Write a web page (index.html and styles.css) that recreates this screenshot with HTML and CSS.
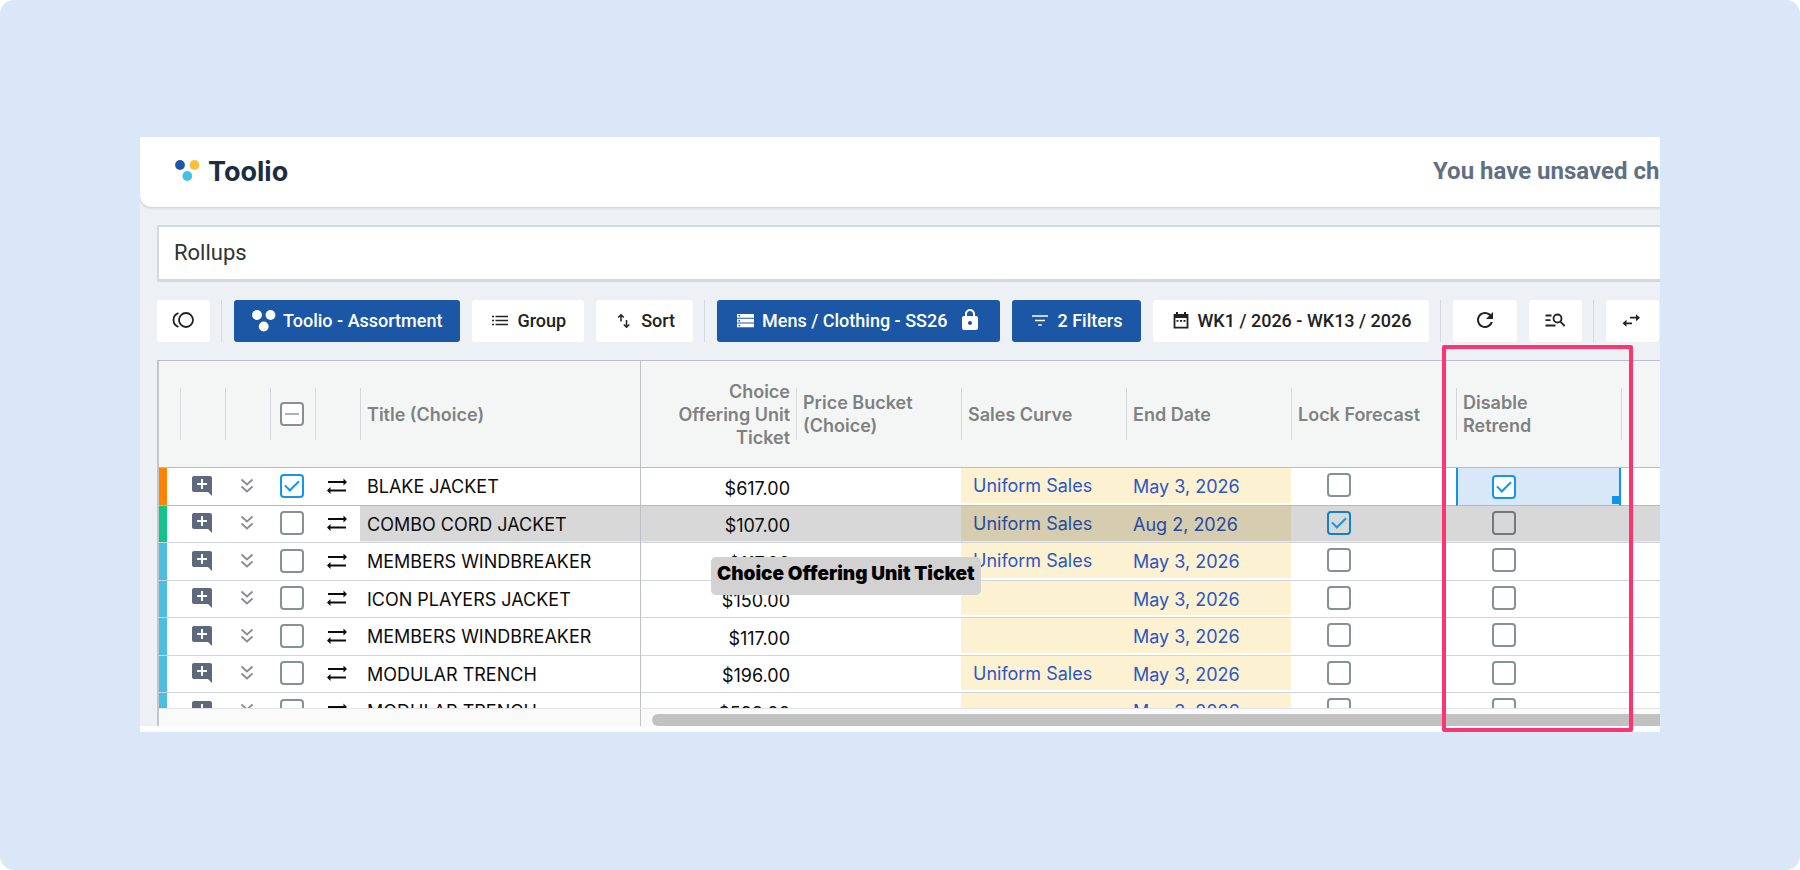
FILE: index.html
```html
<!DOCTYPE html>
<html lang="en">

<head>
	<meta charset="UTF-8">
	<meta name="viewport" content="width=device-width, initial-scale=1.0">
	<title>Toolio - Rollups</title>
	<link rel="stylesheet" href="styles.css">
</head>

<body>
	<!-- icons shared by the table rows -->
	<svg class="sprite" aria-hidden="true">
		<symbol id="i-comment" viewBox="0 0 24 24">
			<path d="M22 4c0-1.1-.9-2-2-2H4c-1.1 0-2 .9-2 2v12c0 1.1.9 2 2 2h14l4 4V4zM17 11h-4v4h-2v-4H7V9h4V5h2v4h4v2z" fill="currentColor"/>
		</symbol>
		<symbol id="i-expand" viewBox="0 0 24 24">
			<path d="M6.500 5.500l5.500 5 5.500-5M6.500 12.500l5.500 5 5.500-5" fill="none" stroke="currentColor" stroke-width="1.800"/>
		</symbol>
		<symbol id="i-swap" viewBox="0 0 24 24">
			<path d="M3 8h16M5 16.500h16" stroke="currentColor" stroke-width="2"/>
			<path d="M18.500 4.500L22 8l-3.500 3.500zM5.500 13L2 16.500 5.500 20z" fill="currentColor"/>
		</symbol>
	</svg>

	<div class="page">
		<main class="panel">
			<header class="topbar">
				<a class="logo" href="#">
					<svg width="25" height="22" viewBox="0 0 25 22" aria-hidden="true">
						<circle cx="5" cy="5" r="4.900" fill="#1c57a8"/>
						<circle cx="19.500" cy="5" r="4.900" fill="#fac03e"/>
						<circle cx="12.300" cy="16" r="4.900" fill="#45c1e8"/>
					</svg>
					<span>Toolio</span>
				</a>
				<div class="unsaved">You have unsaved changes</div>
			</header>

			<div class="content">
				<input class="sheet-name" type="text" value="Rollups" aria-label="Sheet name">

				<div class="toolbar">
					<button class="btn btn-icon" type="button" aria-label="Toggle panel">
						<svg width="24" height="24" viewBox="2 1 24 24" fill="none" stroke="currentColor" stroke-width="1.800">
							<circle cx="16" cy="12" r="7"/>
							<path d="M8.500 5.200C5.500 6.200 3.500 8.800 3.500 12s2 5.800 5 6.800"/>
						</svg>
					</button>
					<span class="sep"></span>
					<button class="btn btn-primary" type="button">
						<svg width="24" height="24" viewBox="0 0 24 24" fill="currentColor">
							<circle cx="5" cy="6" r="4.900"/>
							<circle cx="18.500" cy="6" r="4.900"/>
							<circle cx="11.700" cy="17.500" r="4.900"/>
						</svg>
						Toolio - Assortment
					</button>
					<button class="btn" type="button">
						<svg width="20" height="20" viewBox="0 0 20 20" stroke="currentColor" stroke-width="1.600">
							<path d="M5.500 5.500H18M5.500 9.500H18M5.500 13.500H18M2 5.500h2M2 9.500h2M2 13.500h2"/>
						</svg>
						Group
					</button>
					<button class="btn" type="button">
						<svg width="20" height="20" viewBox="0 0 20 20" fill="none" stroke="currentColor" stroke-width="1.500">
							<path d="M7 10.500V4M4.200 6.500L7 3.700l2.800 2.800M12.500 9v7M9.800 13.500l2.700 2.800 2.800-2.800"/>
						</svg>
						Sort
					</button>
					<span class="sep"></span>
					<button class="btn btn-primary" type="button">
						<svg width="20" height="20" viewBox="0 0 20 20">
							<path d="M2 3h17v3.700H2zM2 7.800h17v3.700H2zM2 12.600h17v3.700H2z" fill="currentColor"/>
							<path d="M3.500 4.100h1.600v1.500H3.500zM3.500 8.900h1.600v1.500H3.500zM3.500 13.700h1.600v1.500H3.500z" fill="#1c57a5"/>
						</svg>
						Mens / Clothing - SS26
						<svg class="lock" width="24" height="24" viewBox="0 1 24 24">
							<path d="M18 8h-1V6c0-2.760-2.240-5-5-5S7 3.240 7 6v2H6c-1.100 0-2 .9-2 2v10c0 1.100.9 2 2 2h12c1.100 0 2-.9 2-2V10c0-1.100-.9-2-2-2zm-6 9c-1.100 0-2-.9-2-2s.9-2 2-2 2 .9 2 2-.9 2-2 2zm3.100-9H8.900V6c0-1.710 1.390-3.100 3.100-3.100s3.100 1.390 3.100 3.100v2z" fill="currentColor"/>
						</svg>
					</button>
					<button class="btn btn-primary" type="button">
						<svg width="20" height="20" viewBox="0 0 20 20" stroke="currentColor" stroke-width="1.700">
							<path d="M2 5h16M5 9.500h10M8.200 14h3.600"/>
						</svg>
						2 Filters
					</button>
					<button class="btn" type="button">
						<svg width="20" height="20" viewBox="0 0 20 20">
							<path d="M3.500 4h13v12.700h-13z" fill="none" stroke="currentColor" stroke-width="1.800"/>
							<path d="M3 3h14v4H3zM5 1h2v3H5zM13 1h2v3h-2zM5.500 9h2v1.800h-2zM9 9h2v1.800H9zM12.500 9h2v1.800h-2z" fill="currentColor"/>
						</svg>
						WK1 / 2026 - WK13 / 2026
					</button>
					<span class="sep"></span>
					<button class="btn btn-refresh" type="button" aria-label="Refresh">
						<svg width="24" height="24" viewBox="0 1 24 24">
							<path d="M17.650 6.350C16.200 4.900 14.210 4 12 4c-4.420 0-7.990 3.580-7.990 8s3.570 8 7.990 8c3.730 0 6.840-2.550 7.730-6h-2.080c-.82 2.330-3.040 4-5.650 4-3.310 0-6-2.690-6-6s2.690-6 6-6c1.660 0 3.140.69 4.220 1.780L13 11h7V4l-2.350 2.350z" fill="currentColor"/>
						</svg>
					</button>
					<button class="btn btn-icon" type="button" aria-label="Find">
						<svg width="24" height="24" viewBox="2 1 24 24" fill="none" stroke="currentColor" stroke-width="1.800">
							<path d="M3.500 7.500h6M3.500 12.200h5M3.500 17.500h10M18.500 13.800l4.200 4.200"/>
							<circle cx="15.500" cy="10.500" r="4"/>
						</svg>
					</button>
					<span class="sep"></span>
					<button class="btn btn-icon" type="button" aria-label="Swap">
						<svg width="24" height="24" viewBox="2 0 24 24">
							<path d="M11 8.700h8M5 14.300h8" stroke="currentColor" stroke-width="1.800"/>
							<path d="M17 5.200l4 3.500-4 3.500zM7.500 10.800l-4 3.500 4 3.500z" fill="currentColor"/>
						</svg>
					</button>
				</div>

				<div class="grid">
					<div class="grid-scroll">
						<table>
							<colgroup>
								<col class="c-status">
								<col class="c-tool">
								<col class="c-tool">
								<col class="c-tool">
								<col class="c-tool">
								<col class="c-title">
								<col class="c-ticket">
								<col class="c-data">
								<col class="c-data">
								<col class="c-data">
								<col class="c-data">
								<col class="c-data">
								<col>
							</colgroup>
							<thead>
								<tr>
									<th></th>
									<th><div class="head"></div></th>
									<th><div class="head"></div></th>
									<th><div class="head head-check"><input class="some" type="checkbox" aria-label="Select all"></div></th>
									<th><div class="head"></div></th>
									<th class="frozen"><div class="head">Title (Choice)</div></th>
									<th><div class="head head-right">Choice Offering Unit Ticket</div></th>
									<th><div class="head">Price Bucket (Choice)</div></th>
									<th><div class="head">Sales Curve</div></th>
									<th><div class="head">End Date</div></th>
									<th><div class="head">Lock Forecast</div></th>
									<th><div class="head head-narrow">Disable Retrend</div></th>
									<th><div class="head"></div></th>
								</tr>
							</thead>
							<tbody id="rows"></tbody>
						</table>
					</div>
					<div class="scrollbar">
						<div class="scroll-left"></div>
						<div class="scroll-track"><div class="scroll-thumb"></div></div>
					</div>
					<div class="tooltip">Choice Offering Unit Ticket</div>
					<div class="marker"></div>
				</div>
			</div>
		</main>
	</div>

	<script>
		var rows = [
			{ status: "orange", title: "BLAKE JACKET", ticket: "$617.00", curve: "Uniform Sales", end: "May 3, 2026", selected: true, retrend: true },
			{ status: "green", title: "COMBO CORD JACKET", ticket: "$107.00", curve: "Uniform Sales", end: "Aug 2, 2026", lock: true, hover: true },
			{ status: "blue", title: "MEMBERS WINDBREAKER", ticket: "$117.00", curve: "Uniform Sales", end: "May 3, 2026" },
			{ status: "blue", title: "ICON PLAYERS JACKET", ticket: "$150.00", curve: "", end: "May 3, 2026" },
			{ status: "blue", title: "MEMBERS WINDBREAKER", ticket: "$117.00", curve: "", end: "May 3, 2026" },
			{ status: "blue", title: "MODULAR TRENCH", ticket: "$196.00", curve: "Uniform Sales", end: "May 3, 2026" },
			{ status: "blue", title: "MODULAR TRENCH", ticket: "$598.00", curve: "", end: "May 3, 2026" }
		];

		function icon(name) {
			return '<svg class="icon ' + name + '" aria-hidden="true"><use href="#i-' + name + '"/></svg>';
		}

		function check(label, on) {
			return '<input type="checkbox" aria-label="' + label + '"' + (on ? ' checked' : '') + '>';
		}

		document.getElementById("rows").innerHTML = rows.map(function (r) {
			return '<tr class="' + (r.hover ? 'hover' : '') + '">' +
				'<td class="status ' + r.status + '"></td>' +
				'<td class="tool">' + icon("comment") + '</td>' +
				'<td class="tool">' + icon("expand") + '</td>' +
				'<td class="tool">' + check("Select " + r.title, r.selected) + '</td>' +
				'<td class="tool">' + icon("swap") + '</td>' +
				'<td class="frozen data">' + r.title + '</td>' +
				'<td class="data ticket">' + r.ticket + '</td>' +
				'<td class="data"></td>' +
				'<td class="data edit curve">' + r.curve + '</td>' +
				'<td class="data edit">' + r.end + '</td>' +
				'<td class="data flag">' + check("Lock forecast", r.lock) + '</td>' +
				'<td class="data flag' + (r.retrend ? ' active' : '') + '">' + check("Disable retrend", r.retrend) + '</td>' +
				'<td class="data"></td>' +
				'</tr>';
		}).join("");
	</script>
</body>

</html>
```
FILE: styles.css
```css
* {
	box-sizing: border-box;
}

body {
	margin: 0;
	background: #fff;
	font-family: Roboto, "Liberation Sans", sans-serif;
	color: #1f2124;
}

.sprite {
	display: none;
}

svg {
	display: block;
	flex: none;
}

.page {
	min-height: 100vh;
	padding: 137px 140px;
	background: #dae7f8;
	border-radius: 14px;
}

.panel {
	overflow: hidden;
	padding-bottom: 6px;
	background: linear-gradient(#edf0f5, #edf0f5) no-repeat 0 0 / 100% calc(100% - 6px) #fff;
}

/* header */
.topbar {
	display: flex;
	align-items: center;
	justify-content: space-between;
	height: 70px;
	padding: 0 0 2px 35px;
	background: #fff;
	border-bottom-left-radius: 12px;
	box-shadow: 0 1px 3px rgba(40, 50, 70, .2);
}

.logo {
	display: flex;
	align-items: center;
	gap: 8px;
	font: 700 27px "Inter", sans-serif;
	color: #1b2c45;
	text-decoration: none;
}

.unsaved {
	width: 227px;
	overflow: hidden;
	white-space: nowrap;
	font-size: 24px;
	font-weight: 700;
	color: #606f83;
}

.content {
	padding: 18px 0 0 17px;
}

.sheet-name {
	display: block;
	width: 100%;
	height: 57px;
	padding: 0 15px 2px;
	border: 2px solid #d5d8de;
	border-width: 2px 0 3px 2px;
	border-radius: 2px 0 0 2px;
	background: #fff;
	font: 22px Roboto, sans-serif;
	color: #333;
}

/* toolbar */
.toolbar {
	display: flex;
	gap: 12px;
	margin: 18px 0;
}

.btn {
	display: flex;
	flex: none;
	align-items: center;
	justify-content: center;
	gap: 7px;
	height: 42px;
	padding: 0 18px 1px;
	border: 0;
	border-radius: 3px;
	background: #fff;
	font: 500 18px Roboto, sans-serif;
	color: #222;
	white-space: nowrap;
}

.btn-primary {
	background: #1c57a5;
	color: #fff;
}

.btn-icon {
	width: 53px;
	padding: 0;
}

.btn-refresh {
	width: 64px;
}

.btn .lock {
	margin-left: 4px;
}

.sep {
	width: 1px;
	margin-left: -1px;
	background: #d6dadf;
}

/* grid */
.grid {
	position: relative;
	border-top: 1px solid #bcbfc7;
	border-left: 2px solid #c2c5cc;
}

.grid-scroll {
	max-height: 347px;
	overflow: hidden;
}

table {
	width: 100%;
	table-layout: fixed;
	border-collapse: separate;
	border-spacing: 0;
	background: #fff;
	font-family: "Inter", sans-serif;
	font-size: 18px;
}

.c-status {
	width: 21px;
}

.c-tool {
	width: 45px;
}

.c-title {
	width: 281px;
}

.c-ticket {
	width: 155px;
}

.c-data {
	width: 165px;
}

th {
	height: 107px;
	padding: 0;
	border-bottom: 1px solid #b9bbc1;
	background: #f4f6f5;
	font-weight: 600;
	color: #7f8181;
	text-align: left;
}

.head {
	display: flex;
	align-items: center;
	height: 52px;
	padding: 0 6px;
	border-left: 1px solid #d3d6da;
	line-height: 23px;
}

.head-check {
	justify-content: center;
	padding: 0 2px 0 0;
}

.head-right {
	justify-content: flex-end;
	padding-left: 30px;
	border-left: 0;
	text-align: right;
}

.head-narrow {
	padding-right: 60px;
}

td {
	height: 38px;
	padding: 0 7px;
	border-bottom: 1px solid #d2d4dc;
	color: #0c0c0c;
	white-space: nowrap;
}

tr:nth-child(even) td {
	height: 37px;
}

tr:first-child td {
	border-bottom-color: #b8b9bf;
}

.frozen {
	border-right: 1px solid #bdc0c9;
}

.status.orange {
	background: linear-gradient(90deg, #ff8200 8px, #fff 8px);
}

.status.green {
	background: linear-gradient(90deg, #10c48a 8px, #fff 8px);
}

.status.blue {
	background: linear-gradient(90deg, #4bbde0 8px, #fff 8px);
}

.tool {
	padding: 0 2px 2px 0;
}

.tool > * {
	margin: 0 auto;
}

.icon {
	width: 24px;
	height: 24px;
}

.comment {
	color: #5d6a7e;
}

.expand {
	color: #8a8c90;
}

.ticket {
	padding: 3px 6px 0;
	text-align: right;
}

td.edit {
	background: #fcf1d0;
	box-shadow: inset 0 -2px #fff;
	color: #2d56c4;
}

.curve {
	padding: 0 0 2px 12px;
}

.flag {
	padding: 0 0 3px 36px;
}

.hover td.data {
	background: #d8d8d8;
	box-shadow: inset 0 -1px #e8eaee;
}

.hover td.edit {
	background: #d6ccb0;
	color: #284a9f;
}

td.active {
	position: relative;
	border-left: 2px solid #0f95ef;
	border-right: 2px solid #0f95ef;
	padding: 0 0 0 34px;
	background: #d9e8f9;
}

/* fill handle of the active cell */
td.active::after {
	content: "";
	position: absolute;
	right: -2px;
	bottom: 1px;
	width: 9px;
	height: 8px;
	background: #0f95ef;
}

input[type="checkbox"] {
	display: grid;
	place-items: center;
	appearance: none;
	width: 24px;
	height: 24px;
	border: 2px solid #859294;
	border-radius: 4px;
	background: #fff;
}

td input[type="checkbox"] {
	margin-top: 0;
	margin-bottom: 0;
}

input[type="checkbox"].some {
	margin: 0;
}

.some::after {
	content: "";
	width: 14px;
	height: 2px;
	background: #a9b3b4;
}

input:checked {
	border-color: #1596ee;
}

input:checked::after {
	content: "";
	width: 12px;
	height: 6px;
	margin-bottom: 4px;
	border: solid #1596ee;
	border-width: 0 0 2px 2px;
	transform: rotate(-45deg);
}

td.tool input[type="checkbox"] {
	margin: 0 auto;
}

.flag input[type="checkbox"] {
	margin-left: 0;
}

.hover .flag input {
	border-color: #717b7d;
	background: transparent;
}

.hover .flag input:checked {
	border-color: #0f80cc;
}

/* bottom scrollbar */
.scrollbar {
	display: flex;
	height: 18px;
	border-top: 1px solid #e3e4e6;
	background: #fafafa;
}

.scroll-left {
	flex: none;
	width: 482px;
	border-right: 1px solid #bdc0c9;
}

.scroll-track {
	flex: 1;
	padding: 5px 0 0 11px;
}

.scroll-thumb {
	height: 12px;
	border-radius: 6px 0 0 6px;
	background: #c1c1c1;
}

/* dragged column label */
.tooltip {
	position: absolute;
	top: 196px;
	left: 552px;
	height: 38px;
	padding: 0 6px;
	border-radius: 5px;
	background: #d2d2d2;
	font: 900 19px/34px "Inter", sans-serif;
	color: #000;
	white-space: nowrap;
}

.marker {
	position: absolute;
	top: -16px;
	bottom: -6px;
	left: 1283px;
	width: 191px;
	border: 4px solid #fb3570;
	border-radius: 2px;
}
```
